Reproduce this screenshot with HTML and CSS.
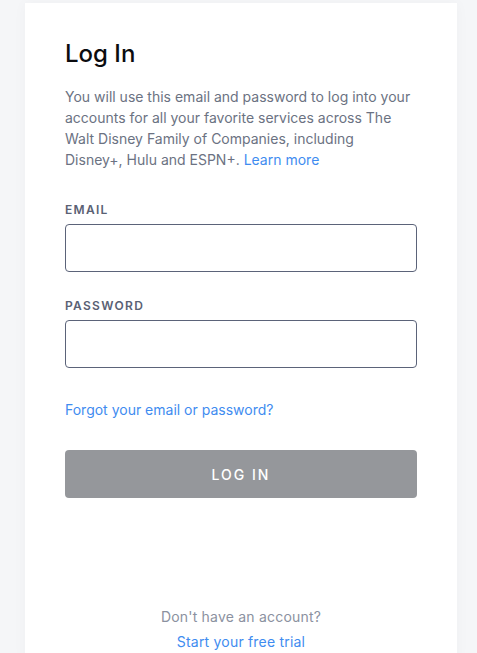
FILE: index.html
```html
<!DOCTYPE html>
<html lang="en">
<head>
<meta charset="utf-8">
<title>Log In</title>
<link rel="stylesheet" href="styles.css">
</head>
<body>
<main class="card">
  <h1 class="title">Log In</h1>
  <p class="intro">You will use this email and password to log into your accounts for all your favorite services across The Walt Disney Family of Companies, including Disney+, Hulu and ESPN+. <a class="link" href="#">Learn more</a></p>
  <form class="form">
    <label class="label" for="email">EMAIL</label>
    <input class="input" id="email" type="email">
    <label class="label label-pw" for="password">PASSWORD</label>
    <input class="input" id="password" type="password">
    <a class="link forgot" href="#">Forgot your email or password?</a>
    <button class="btn" type="button">LOG IN</button>
  </form>
  <div class="footer">
    <p class="footer-q">Don't have an account?</p>
    <a class="link footer-link" href="#">Start your free trial</a>
  </div>
</main>
</body>
</html>
```
FILE: styles.css
```css
html, body {
  margin: 0;
  padding: 0;
}
body {
  background: #f5f6f8;
  font-family: Inter, "Noto Sans", Arial, sans-serif;
  overflow: hidden;
}
.card {
  margin: 3px 0 0 25px;
  width: 432px;
  min-height: 660px;
  box-sizing: border-box;
  padding: 36px 40px 0;
  background: #fff;
  box-shadow: 0 0 14px rgba(20, 30, 60, 0.03);
  display: flex;
  flex-direction: column;
}
.title {
  margin: 0;
  font-size: 24px;
  line-height: 30px;
  font-weight: 500;
  color: #0b0c0f;
}
.intro {
  margin: 17px 0 0;
  max-width: 347px;
  font-size: 14px;
  line-height: 21px;
  color: #6b7282;
}
.link {
  color: #3f8cf0;
  text-decoration: none;
}
.form {
  margin-top: 31px;
  display: flex;
  flex-direction: column;
}
.label {
  font-size: 12px;
  line-height: 17px;
  font-weight: 600;
  letter-spacing: 1.3px;
  color: #5a6174;
  margin-bottom: 6px;
}
.label-pw {
  margin-top: 25px;
}
.input {
  height: 48px;
  box-sizing: border-box;
  border: 1px solid #5b6379;
  border-radius: 4px;
  background: #fff;
  margin: 0;
  padding: 0 12px;
}
.forgot {
  margin-top: 32px;
  font-size: 14px;
  line-height: 20px;
  align-self: flex-start;
}
.btn {
  margin-top: 30px;
  height: 48px;
  border: 0;
  border-radius: 4px;
  background: #95979b;
  color: #fff;
  font-family: inherit;
  font-size: 14px;
  font-weight: 500;
  letter-spacing: 2px;
}
.footer {
  margin-top: 109px;
  display: flex;
  flex-direction: column;
  align-items: center;
  gap: 5px;
  font-size: 14px;
  line-height: 20px;
}
.footer-q {
  margin: 0;
  color: #8b91a0;
  letter-spacing: 0.2px;
}
.footer-link {
  letter-spacing: 0.2px;
}
```
